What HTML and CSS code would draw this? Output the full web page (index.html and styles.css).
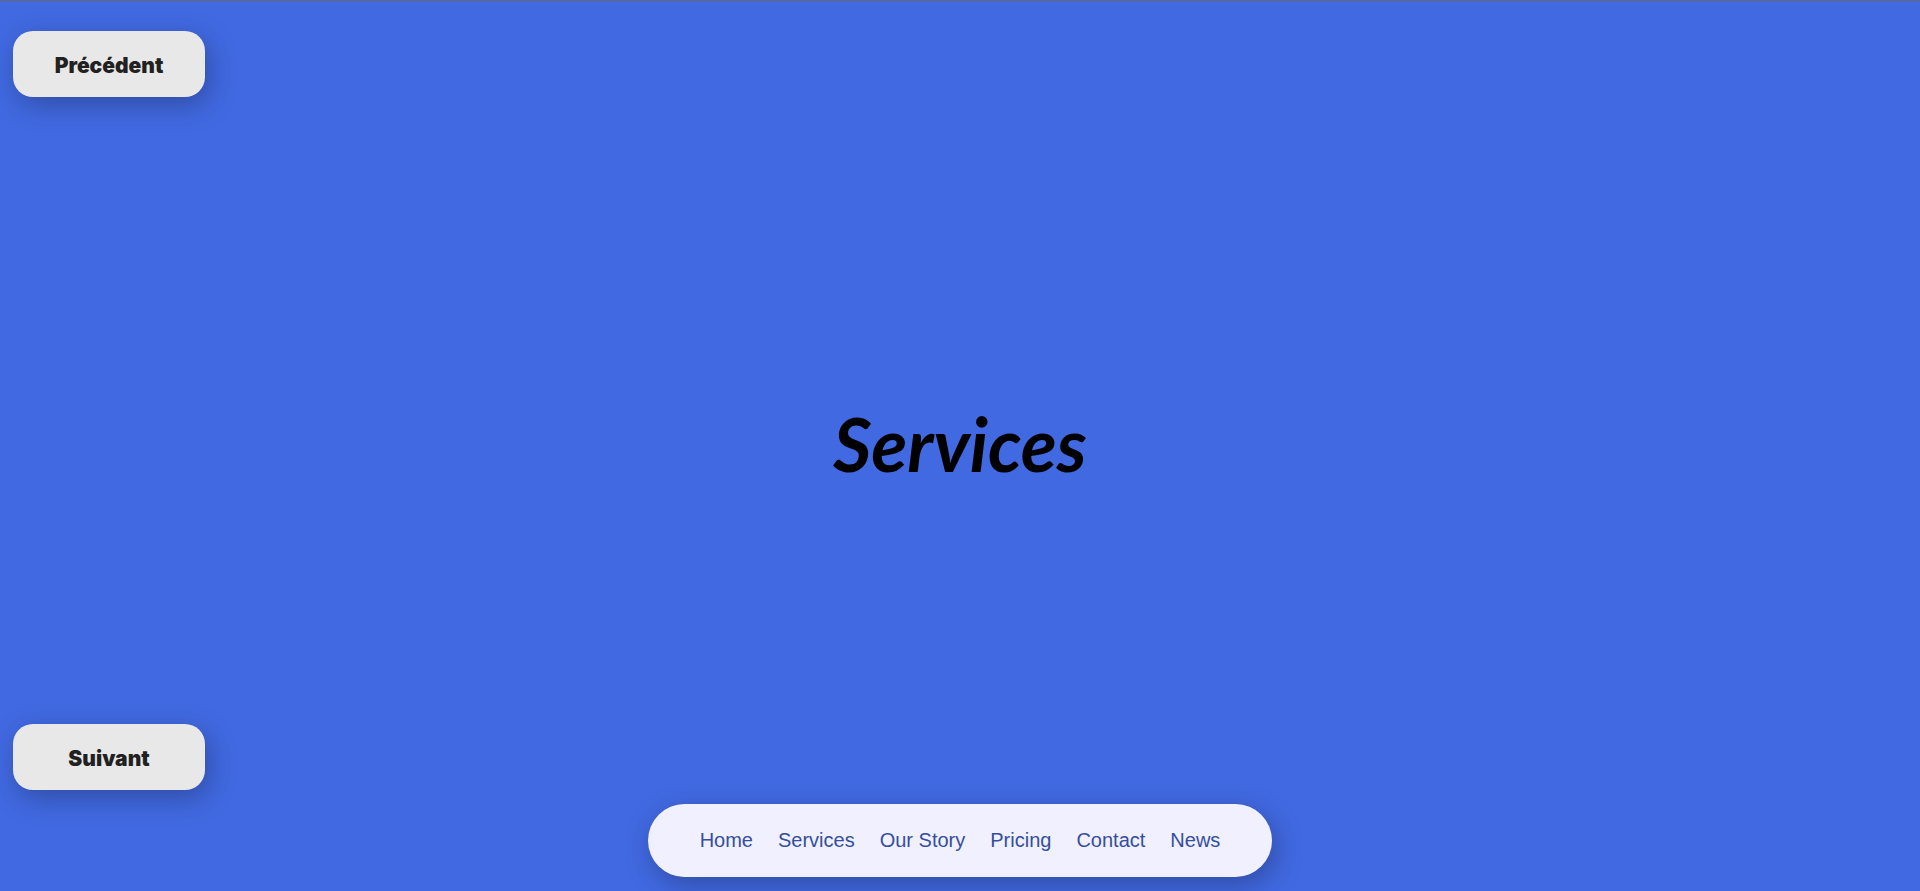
FILE: index.html
```html
<!DOCTYPE html>
<html lang="fr">
<head>
<meta charset="utf-8">
<meta name="viewport" content="width=device-width, initial-scale=1">
<title>Services</title>
<link rel="stylesheet" href="styles.css">
</head>
<body>
<main class="slide">
  <button class="slide-button" type="button">Précédent</button>
  <h1 class="slide-title">Services</h1>
  <button class="slide-button" type="button">Suivant</button>
</main>
<nav class="menu">
  <a class="menu-link" href="#home">Home</a>
  <a class="menu-link" href="#services">Services</a>
  <a class="menu-link" href="#story">Our Story</a>
  <a class="menu-link" href="#pricing">Pricing</a>
  <a class="menu-link" href="#contact">Contact</a>
  <a class="menu-link" href="#news">News</a>
</nav>
</body>
</html>
```

FILE: styles.css
```css
* {
  box-sizing: border-box;
}

body {
  margin: 0;
  min-height: 100vh;
  display: flex;
  flex-direction: column;
  align-items: center;
  padding-bottom: 14px;
  border-top: 1px solid #696969;
  background: #4169e1;
  font-family: "Liberation Sans", Arial, sans-serif;
}

.slide {
  flex: 1;
  align-self: stretch;
  display: flex;
  flex-direction: column;
  justify-content: space-between;
  padding: 30px 13px 14px;
}

.slide-button {
  width: 192px;
  height: 66px;
  padding: 2px 0 0;
  border: 0;
  border-radius: 20px;
  background: #e8e8e8;
  color: #212121;
  font-family: Inter, "Liberation Sans", sans-serif;
  font-size: 21px;
  font-weight: 900;
  box-shadow: 4px 8px 28px rgba(0, 0, 0, 0.27);
  cursor: pointer;
}

.slide-title {
  margin: 0;
  padding-top: 66px;
  text-align: center;
  font-family: Lato, "Liberation Sans", sans-serif;
  font-size: 74px;
  font-style: italic;
  font-weight: 700;
  line-height: 80px;
  color: #000;
}

.menu {
  display: flex;
  gap: 25px;
  padding: 25px 52px;
  border-radius: 40px;
  background: #f1f0ff;
  box-shadow: 4px 8px 28px rgba(0, 0, 0, 0.27);
}

.menu-link {
  color: #354f9c;
  font-size: 20px;
  line-height: 23px;
  text-decoration: none;
}
```
